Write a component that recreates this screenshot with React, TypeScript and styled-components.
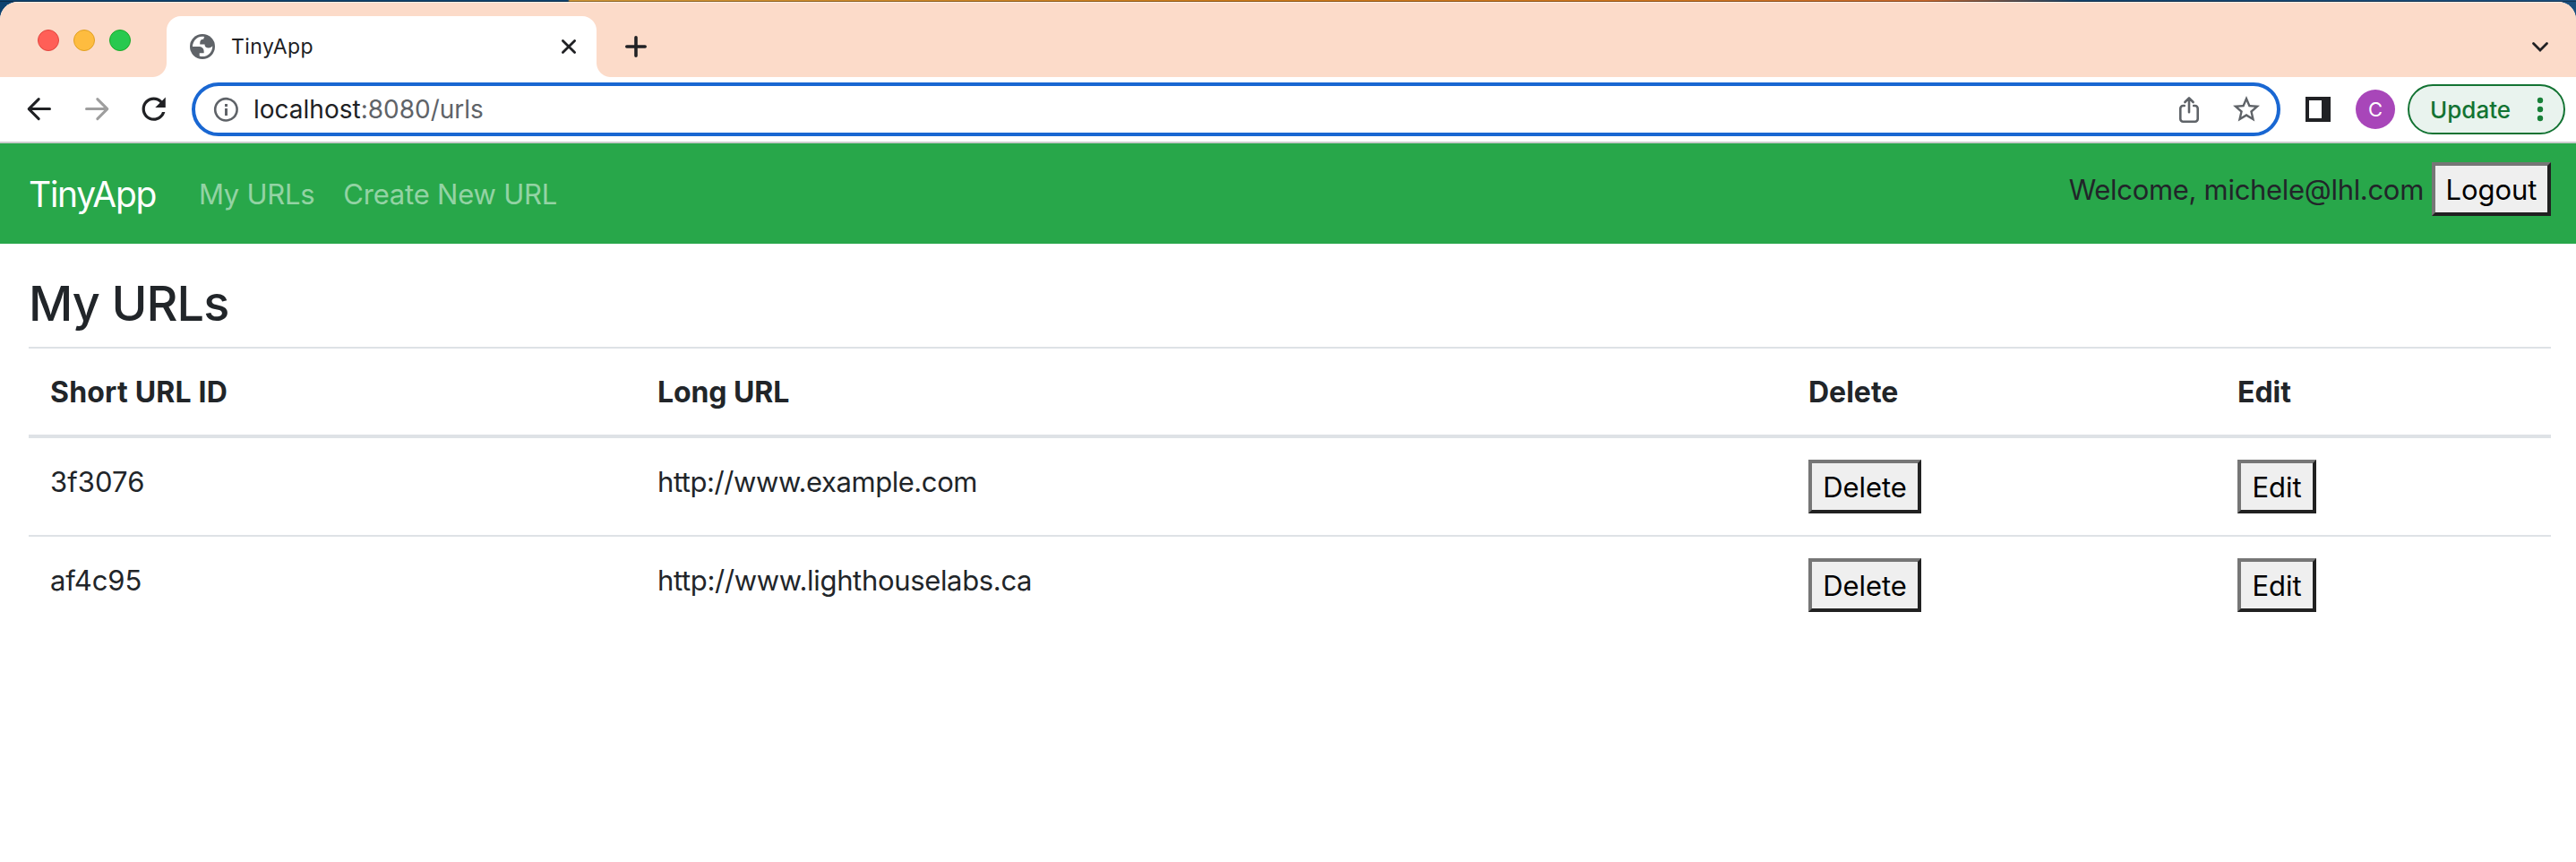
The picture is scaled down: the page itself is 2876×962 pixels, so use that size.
import React from 'react';
import styled, { createGlobalStyle } from 'styled-components';

const GlobalStyle = createGlobalStyle`
  *, *::before, *::after { box-sizing: border-box; }
  body {
    margin: 0;
    background: #fff;
    color: #212529;
    font-family: Inter, Roboto, "Liberation Sans", sans-serif;
    font-size: 31px;
    line-height: 48px;
  }
  svg { display: block; flex: none; }
`;

const Desktop = styled.div`
  height: 962px;
  padding-top: 2px;
  background:
    linear-gradient(transparent 1px, rgba(0, 0, 0, 0.32) 1px, rgba(0, 0, 0, 0.32) 2px, transparent 2px),
    linear-gradient(90deg, #0e426f 634px, #cf9637 636px, #cc7a1a 1400px, #cf7520 1900px, #c8682c 2150px, #12426c 2320px, #1b4f7e 2876px);
`;

const BrowserWindow = styled.div`
  height: 960px;
  overflow: hidden;
  border-radius: 20px 20px 0 0;
  background: #fff;
`;

const TabStrip = styled.div`
  display: flex;
  height: 84px;
  padding: 16px 30px 0 42px;
  background: #fcdbc9;
  box-shadow: inset 0 1px #fff0e8;
`;

const TrafficLights = styled.div`
  display: flex;
  gap: 16px;
  width: 144px;
  padding-top: 15px;
`;

const Light = styled.span<{ $fill: string; $rim: string }>`
  width: 24px;
  height: 24px;
  border: 1px solid ${p => p.$rim};
  border-radius: 50%;
  background: ${p => p.$fill};
`;

const Tab = styled.div`
  position: relative;
  display: flex;
  align-items: center;
  width: 480px;
  height: 68px;
  padding: 0 22px 0 26px;
  border-radius: 16px 16px 0 0;
  background: #fff;

  &::before, &::after {
    content: "";
    position: absolute;
    bottom: 0;
    width: 16px;
    height: 16px;
  }
  &::before {
    right: 100%;
    background: radial-gradient(circle at 0 0, transparent 15.5px, #fff 16.5px);
  }
  &::after {
    left: 100%;
    background: radial-gradient(circle at 100% 0, transparent 15.5px, #fff 16.5px);
  }
`;

const TabTitle = styled.span`
  flex: 1;
  margin-left: 18px;
  color: #202124;
  font-size: 23px;
  line-height: 32px;
  letter-spacing: 0.43px;
`;

const NewTab = styled.div`
  display: flex;
  flex: 1;
  align-items: center;
  height: 68px;
  padding-left: 31px;
`;

const TabSearch = styled.div`
  display: flex;
  align-items: center;
  height: 68px;
`;

const Toolbar = styled.div`
  display: flex;
  align-items: center;
  height: 74px;
  padding: 0 12px 0 24px;
  border-bottom: 2px solid #cbcccc;
  background: #fff;
`;

const NavButtons = styled.div`
  display: flex;
  gap: 24px;
  width: 190px;
`;

const AddressBar = styled.div`
  display: flex;
  align-items: center;
  width: 2332px;
  height: 60px;
  padding: 0 16px 0 20px;
  border: 4px solid #1967d2;
  border-radius: 30px;
`;

const Address = styled.span`
  flex: 1;
  margin-left: 17px;
  color: #5f6368;
  font-size: 28px;
  line-height: 40px;
`;

const Host = styled.span`
  color: #202124;
`;

const AddressActions = styled.div`
  display: flex;
  align-items: center;
  gap: 32px;
`;

const Extras = styled.div`
  display: flex;
  flex: 1;
  align-items: center;
  padding-left: 28px;
`;

const Avatar = styled.div`
  display: flex;
  align-items: center;
  justify-content: center;
  width: 44px;
  height: 44px;
  margin: 0 14px 0 28px;
  border-radius: 50%;
  background: #a846b9;
  color: #fff;
  font-size: 22px;
  font-weight: 400;
  line-height: 44px;
`;

const UpdatePill = styled.div`
  display: flex;
  flex: 1;
  align-items: center;
  justify-content: space-between;
  height: 56px;
  padding: 0 22px 0 23px;
  border: 2px solid #137333;
  border-radius: 28px;
  background: #e9f3ee;
  color: #137333;
  font-size: 26px;
  font-weight: 500;
  line-height: 36px;
`;

const UpdateLabel = styled.span`
  padding-top: 2px;
`;

const Navbar = styled.nav`
  display: flex;
  align-items: center;
  height: 112px;
  padding: 0 28px 0 32px;
  background: #28a74a;
`;

const Brand = styled.a`
  width: 190px;
  padding-top: 2px;
  color: #fff;
  font-size: 39px;
  line-height: 60px;
  letter-spacing: -1.27px;
`;

const NavLink = styled.a<{ $spacing: string }>`
  margin-right: 32px;
  padding-top: 2px;
  color: rgba(255, 255, 255, 0.5);
  letter-spacing: ${p => p.$spacing};
`;

const Session = styled.div`
  display: flex;
  align-items: baseline;
  gap: 9px;
  margin: 0 0 10px auto;
  letter-spacing: -0.31px;
`;

const Button = styled.button<{ $width: number }>`
  width: ${p => p.$width}px;
  height: 60px;
  padding: 3px 0 1px;
  border: 4px solid;
  border-color: #767676 #212121 #212121 #767676;
  background: #efefef;
  color: #000;
  font: inherit;
  line-height: 48px;
  letter-spacing: -0.05px;
  text-align: center;
`;

const Page = styled.main`
  padding: 32px 28px 0 32px;
`;

const Title = styled.h3`
  margin: 0 0 14px;
  font-size: 54px;
  font-weight: 500;
  line-height: 69px;
  letter-spacing: -0.9px;
`;

const Table = styled.table`
  width: 100%;
  table-layout: fixed;
  border-collapse: separate;
  border-spacing: 0;
`;

const Column = styled.col<{ $width?: number }>`
  width: ${p => (p.$width ? `${p.$width}px` : 'auto')};
`;

const HeadCell = styled.th<{ $spacing?: string }>`
  height: 102px;
  padding: 25px 24px 23px;
  border-top: 2px solid #dee2e6;
  border-bottom: 4px solid #dee2e6;
  font-size: 32px;
  font-weight: 700;
  letter-spacing: ${p => p.$spacing ?? '0'};
  text-align: left;
  vertical-align: bottom;
`;

const Row = styled.tr`
  & + & > td { border-top: 2px solid #dee2e6; }
`;

const Cell = styled.td<{ $spacing?: string }>`
  padding: 24px;
  line-height: 50px;
  letter-spacing: ${p => p.$spacing ?? '0'};
  vertical-align: top;

  & > button { display: block; }
`;

const GlobeIcon = () => (
  <svg width="28" height="28" viewBox="0 0 28 28">
    <circle cx="14" cy="14" r="14" fill="#5f6368" />
    <path fill="#fff" d="M3 14h6.200c4.800 0 6.900 2.400 6.400 7.200h-4.900v3.400A11.200 11.200 0 0 0 25.200 13.300c-.9 1.400-2.300 2.100-4.200 2.100-3 0-4.500-1.300-4.500-3.900h-5.200c-.4-3.800.9-5.700 4-5.700 0-1.300.4-2.200 1.100-2.800A11.200 11.200 0 0 0 3 14z" />
  </svg>
);

const CloseIcon = () => (
  <svg width="18" height="18" viewBox="0 0 18 18" stroke="#202124" strokeWidth="2.8" strokeLinecap="round">
    <path d="M2.400 2.400 15.600 15.600M15.600 2.400 2.400 15.600" />
  </svg>
);

const PlusIcon = () => (
  <svg width="26" height="26" viewBox="0 0 26 26" stroke="#202124" strokeWidth="3.6" strokeLinecap="round">
    <path d="M13 2.8v20.4M2.8 13h20.4" />
  </svg>
);

const ChevronIcon = () => (
  <svg width="20" height="14" viewBox="0 0 20 14" fill="none" stroke="#202124" strokeWidth="2.8" strokeLinecap="round">
    <path d="M2.500 3.500 10 11l7.500-7.500" />
  </svg>
);

const ArrowIcon = ({ forward = false }: { forward?: boolean }) => (
  <svg width="40" height="40" viewBox="0 0 40 40" fill="none" stroke={forward ? '#9e9e9e' : '#202124'} strokeWidth="3" strokeLinecap="round" strokeLinejoin="round">
    {forward ? <path d="M8.5 19.6h23M20.8 8.6l11 11-11 11" /> : <path d="M31.5 19.6h-23M19.2 8.6l-11 11 11 11" />}
  </svg>
);

const ReloadIcon = () => (
  <svg width="40" height="40" viewBox="0 0 24.4 24.4" fill="#202124">
    <path d="M17.65 6.35C16.2 4.9 14.21 4 12 4c-4.42 0-7.99 3.58-7.99 8s3.57 8 7.99 8c3.73 0 6.84-2.55 7.73-6h-2.08c-.82 2.33-3.04 4-5.65 4-3.31 0-6-2.69-6-6s2.69-6 6-6c1.66 0 3.14.69 4.22 1.78L13 11h7V4l-2.35 2.35z" />
  </svg>
);

const InfoIcon = () => (
  <svg width="28" height="28" viewBox="0 0 28 28" fill="#5f6368">
    <circle cx="14.4" cy="14.3" r="12.2" fill="none" stroke="#5f6368" strokeWidth="2.6" />
    <path d="M13 13h3v8h-3zM13 8h3v3h-3z" />
  </svg>
);

const ShareIcon = () => (
  <svg width="28" height="32" viewBox="0 0 28 32" fill="none" stroke="#5f6368" strokeWidth="2.6" strokeLinecap="round" strokeLinejoin="round">
    <path d="M8.800 12H7.300a3 3 0 0 0-3 3v11.800a3 3 0 0 0 3 3h13.400a3 3 0 0 0 3-3V15a3 3 0 0 0-3-3h-1.500M14 19.300V3.600M9.400 8 14 3.400 18.600 8" />
  </svg>
);

const StarIcon = () => (
  <svg width="36" height="36" viewBox="0 0 24 24" fill="#5f6368">
    <path d="M22 9.240l-7.190-.620L12 2 9.190 8.630 2 9.240l5.460 4.730L5.820 21 12 17.270 18.180 21l-1.630-7.030L22 9.240zM12 15.400l-3.760 2.270 1-4.280-3.320-2.880 4.380-.380L12 6.100l1.710 4.040 4.380.380-3.320 2.880 1 4.280L12 15.400z" />
  </svg>
);

const SidePanelIcon = () => (
  <svg width="28" height="28" viewBox="0 0 28 28">
    <path fill="#202124" fillRule="evenodd" d="M0 0h28v28H0zM4 4v20h14V4z" />
  </svg>
);

const DotsIcon = () => (
  <svg width="8" height="28" viewBox="0 0 8 28" fill="#188038">
    <circle cx="4" cy="4" r="3.2" />
    <circle cx="4" cy="14" r="3.2" />
    <circle cx="4" cy="24" r="3.2" />
  </svg>
);

const urls = [
  { id: '3f3076', idSpacing: '0.1px', longUrl: 'http://www.example.com', urlSpacing: '-0.44px' },
  { id: 'af4c95', idSpacing: '-0.1px', longUrl: 'http://www.lighthouselabs.ca', urlSpacing: '-0.34px' },
];

export default function App() {
  return (
    <Desktop>
      <GlobalStyle />
      <BrowserWindow>
        <TabStrip>
          <TrafficLights>
            <Light $fill="#ff5f57" $rim="#e2463f" />
            <Light $fill="#febc3f" $rim="#dfa023" />
            <Light $fill="#28c94f" $rim="#1aab29" />
          </TrafficLights>
          <Tab>
            <GlobeIcon />
            <TabTitle>TinyApp</TabTitle>
            <CloseIcon />
          </Tab>
          <NewTab><PlusIcon /></NewTab>
          <TabSearch><ChevronIcon /></TabSearch>
        </TabStrip>
        <Toolbar>
          <NavButtons>
            <ArrowIcon />
            <ArrowIcon forward />
            <ReloadIcon />
          </NavButtons>
          <AddressBar>
            <InfoIcon />
            <Address><Host>localhost</Host>:8080/urls</Address>
            <AddressActions>
              <ShareIcon />
              <StarIcon />
            </AddressActions>
          </AddressBar>
          <Extras>
            <SidePanelIcon />
            <Avatar>C</Avatar>
            <UpdatePill>
              <UpdateLabel>Update</UpdateLabel>
              <DotsIcon />
            </UpdatePill>
          </Extras>
        </Toolbar>
        <Navbar>
          <Brand>TinyApp</Brand>
          <NavLink $spacing="-0.28px">My URLs</NavLink>
          <NavLink $spacing="-0.2px">Create New URL</NavLink>
          <Session>
            <span>Welcome, michele@lhl.com</span>
            <Button $width={133}>Logout</Button>
          </Session>
        </Navbar>
        <Page>
          <Title>My URLs</Title>
          <Table>
            <colgroup>
              <Column $width={678} />
              <Column $width={1285} />
              <Column $width={479} />
              <Column />
            </colgroup>
            <thead>
              <tr>
                <HeadCell $spacing="0.2px">Short URL ID</HeadCell>
                <HeadCell $spacing="-0.1px">Long URL</HeadCell>
                <HeadCell>Delete</HeadCell>
                <HeadCell>Edit</HeadCell>
              </tr>
            </thead>
            <tbody>
              {urls.map(url => (
                <Row key={url.id}>
                  <Cell $spacing={url.idSpacing}>{url.id}</Cell>
                  <Cell $spacing={url.urlSpacing}>{url.longUrl}</Cell>
                  <Cell><Button $width={126}>Delete</Button></Cell>
                  <Cell><Button $width={88}>Edit</Button></Cell>
                </Row>
              ))}
            </tbody>
          </Table>
        </Page>
      </BrowserWindow>
    </Desktop>
  );
}
